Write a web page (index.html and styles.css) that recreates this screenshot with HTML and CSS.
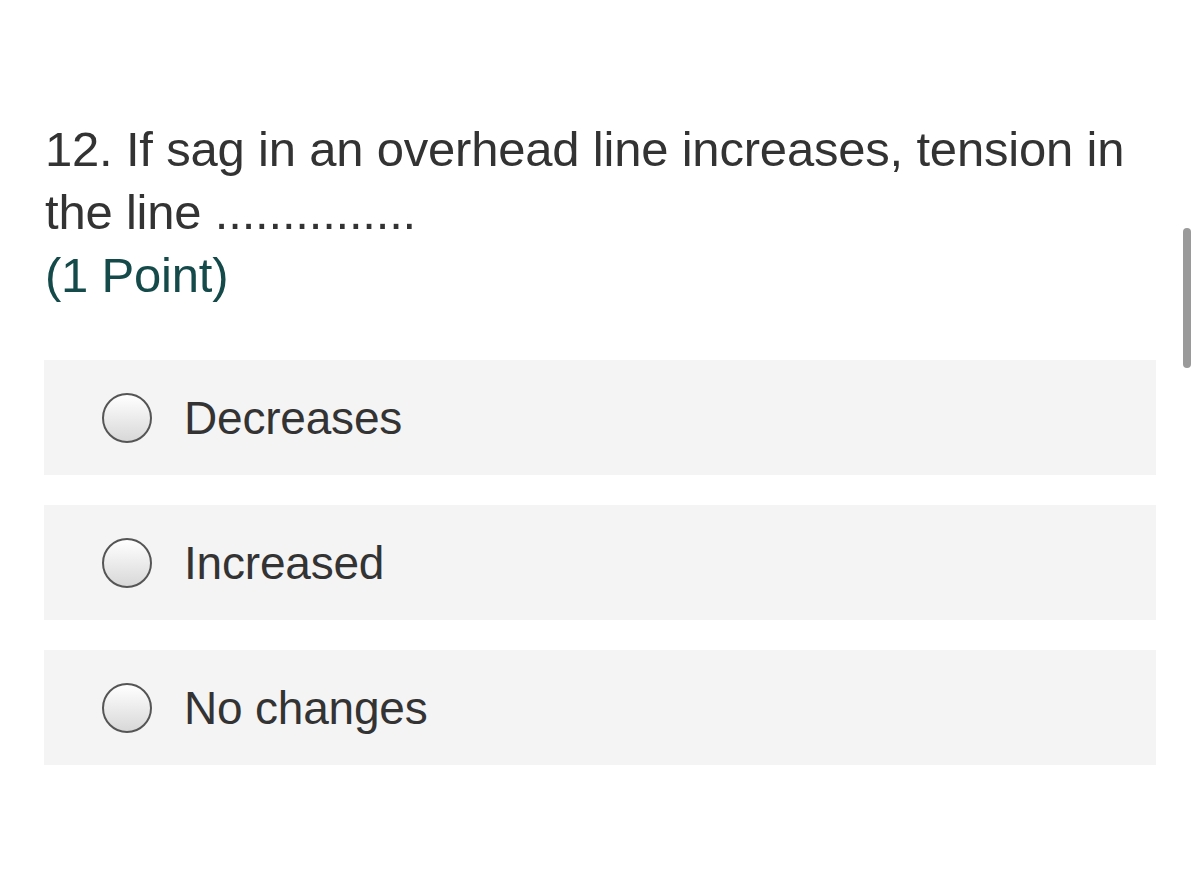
FILE: index.html
```html
<!DOCTYPE html>
<html>
<head>
<meta charset="utf-8">
<link rel="stylesheet" href="styles.css">
</head>
<body>
<div class="page">
  <div class="question">
    <div class="title">12. If sag in an overhead line increases, tension in the line ...............</div>
    <div class="points">(1 Point)</div>
  </div>
  <div class="options">
    <div class="option"><span class="radio"></span><span class="label">Decreases</span></div>
    <div class="option"><span class="radio"></span><span class="label">Increased</span></div>
    <div class="option"><span class="radio"></span><span class="label">No changes</span></div>
  </div>
</div>
<div class="scrollbar"></div>
</body>
</html>
```
FILE: styles.css
```css
html, body {
  margin: 0;
  padding: 0;
  background: #ffffff;
}
body {
  width: 1200px;
  height: 890px;
  overflow: hidden;
  font-family: "Liberation Sans", Arial, sans-serif;
}
.page {
  padding: 118px 0 0 44px;
  width: 1112px;
}
.question {
  padding-left: 1px;
  color: #333333;
  font-size: 49px;
  line-height: 63px;
  letter-spacing: -0.2px;
}
.title {
  width: 1110px;
}
.points {
  color: #154a4a;
}
.options {
  margin-top: 53px;
  display: flex;
  flex-direction: column;
  gap: 30px;
}
.option {
  height: 115px;
  background: #f4f4f4;
  display: flex;
  align-items: center;
  padding-left: 58px;
}
.radio {
  width: 46px;
  height: 46px;
  border: 2.5px solid #555555;
  border-radius: 50%;
  background: linear-gradient(#ffffff, #d8d8d8);
  flex: none;
}
.label {
  margin-left: 32px;
  font-size: 46px;
  color: #333333;
  letter-spacing: -0.2px;
}
.scrollbar {
  position: absolute;
  left: 1183px;
  top: 228px;
  width: 8px;
  height: 140px;
  background: #9a9a9a;
  border-radius: 4px;
}
```
